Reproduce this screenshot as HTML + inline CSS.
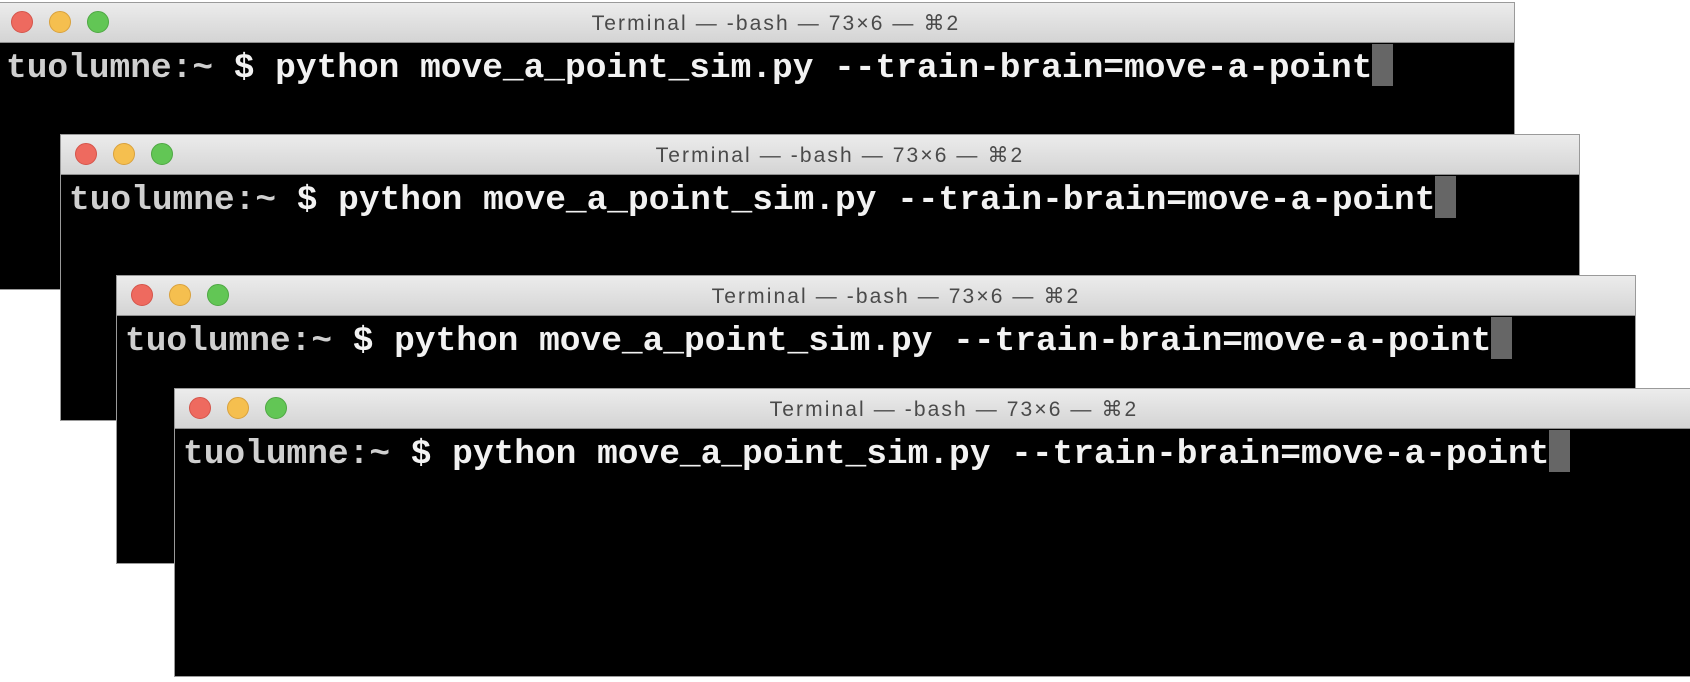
<!DOCTYPE html>
<html><head><meta charset="utf-8"><style>
body{margin:0;width:1690px;height:682px;background:#fff;position:relative;overflow:hidden}
.w{position:absolute;background:#000;border:1px solid #9a9a9a;box-sizing:border-box}
.t{position:absolute;left:0;right:0;top:0;height:40px;background:linear-gradient(#ececec,#d4d4d4);border-bottom:1px solid #8f8f8f;box-sizing:border-box}
.l{position:absolute;top:8px;width:22px;height:22px;border-radius:50%;box-sizing:border-box}
.r{background:#ee6a5f;border:1px solid #d5544a}.y{background:#f5bf4f;border:1px solid #d9a13c}.g{background:#62c655;border:1px solid #4ea843}
.tt{position:absolute;top:8px;height:24px;line-height:24px;font:21px "Liberation Sans",sans-serif;letter-spacing:2.1px;color:#4a4a4a;white-space:nowrap;transform:translateX(-50%)}
.c{position:absolute;top:40px;left:8px;height:44px;line-height:44px;font:bold 34.5px "Liberation Mono",monospace;color:#f2f2f2;white-space:pre}
.c .x{position:relative;top:6px}
.c span.p{color:#cfcfcf}
.cur{display:inline-block;width:21px;height:42px;background:#666;vertical-align:top;margin-top:1px}
</style></head><body>
<div class="w" style="left:-1px;top:2px;width:1516px;height:288px">
<div class="t"><div class="l r" style="left:11px"></div><div class="l y" style="left:49px"></div><div class="l g" style="left:87px"></div><div class="tt" style="left:776px">Terminal — -bash — 73×6 — ⌘2</div></div>
<div class="c" style="left:6px"><span class="x"><span class="p">tuolumne:~</span> $ python move_a_point_sim.py --train-brain=move-a-point</span><span class="cur"></span></div></div>
<div class="w" style="left:60px;top:134px;width:1520px;height:287px">
<div class="t"><div class="l r" style="left:14px"></div><div class="l y" style="left:52px"></div><div class="l g" style="left:90px"></div><div class="tt" style="left:779px">Terminal — -bash — 73×6 — ⌘2</div></div>
<div class="c"><span class="x"><span class="p">tuolumne:~</span> $ python move_a_point_sim.py --train-brain=move-a-point</span><span class="cur"></span></div></div>
<div class="w" style="left:116px;top:275px;width:1520px;height:289px">
<div class="t"><div class="l r" style="left:14px"></div><div class="l y" style="left:52px"></div><div class="l g" style="left:90px"></div><div class="tt" style="left:779px">Terminal — -bash — 73×6 — ⌘2</div></div>
<div class="c"><span class="x"><span class="p">tuolumne:~</span> $ python move_a_point_sim.py --train-brain=move-a-point</span><span class="cur"></span></div></div>
<div class="w" style="left:174px;top:388px;width:1520px;height:289px">
<div class="t"><div class="l r" style="left:14px"></div><div class="l y" style="left:52px"></div><div class="l g" style="left:90px"></div><div class="tt" style="left:779px">Terminal — -bash — 73×6 — ⌘2</div></div>
<div class="c"><span class="x"><span class="p">tuolumne:~</span> $ python move_a_point_sim.py --train-brain=move-a-point</span><span class="cur"></span></div></div>
</body></html>
